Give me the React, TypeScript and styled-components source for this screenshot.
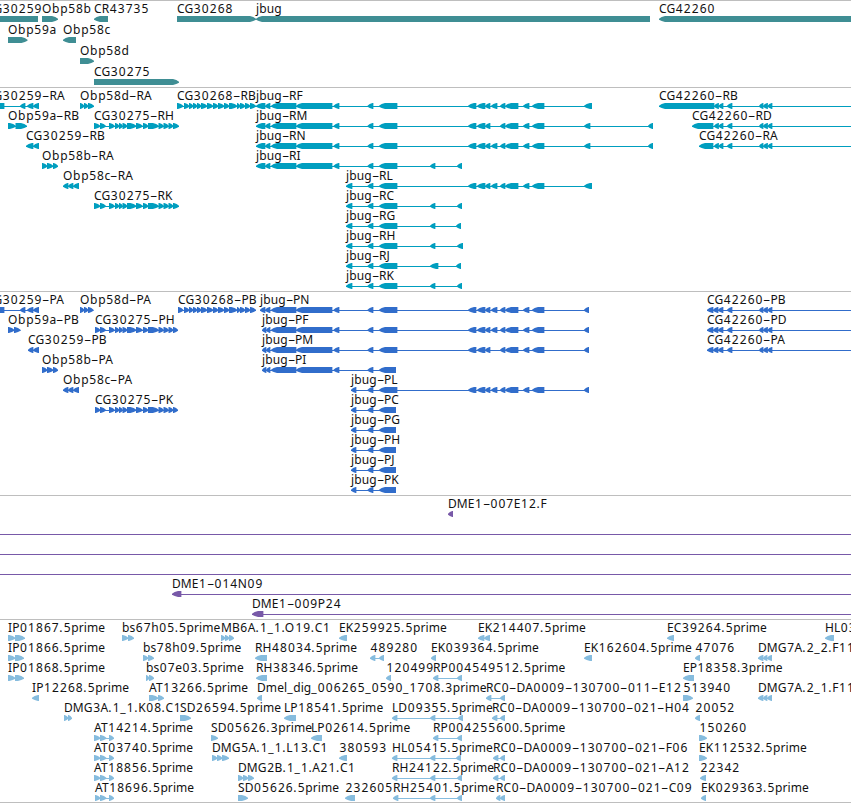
import React from 'react'
import styled, { createGlobalStyle } from 'styled-components'

type Exon = [number, number]
type Strand = '+' | '-'

interface FeatureData {
    name?: string
    strand: Strand
    exons: Exon[]
    start?: number
    end?: number
}

interface TrackData {
    id: string
    color: string
    rowHeight: number
    height: number
    rows: FeatureData[][]
}

const HEAD = 6

const fwd = (name: string, exons: Exon[], extra: Partial<FeatureData> = {}): FeatureData =>
    ({ name, strand: '+', exons, ...extra })
const rev = (name: string, exons: Exon[], extra: Partial<FeatureData> = {}): FeatureData =>
    ({ name, strand: '-', exons, ...extra })

// neighbouring exons that touch each other, given by their edges
const chain = (...edges: number[]): Exon[] =>
    edges.slice(1).map((edge, i) => [edges[i], edge] as Exon)

const cg30259: Exon[] = [[-14, 4], [20, 25], [27, 33], [33, 39]]
const cg30268: Exon[] = [[177, 183], ...chain(184, 189, 193, 197, 201), ...chain(201, 207, 213), ...chain(213, 218, 224, 229, 237, 240, 245, 250, 256)]
const cg30275: Exon[] = [...chain(94, 100, 105.5), ...chain(109, 114.5), ...chain(115, 119, 122.5, 127), ...chain(127, 136, 142.5), ...chain(143, 148, 158.5, 163.5, 168.5, 173, 179)]
const cg42260: Exon[] = [[714, 718.5], [718.5, 723], [727, 732], [759, 763], [763, 767.5], [767.5, 772]]
const cg42260p: Exon[] = [[707, 713], [713, 718], [718, 723], [727, 732], [759, 763], [763, 767.5], [767.5, 772]]

const jbugBody: Exon[] = [[271, 296], [296, 332], [333.5, 339]]
const jbugMid: Exon[] = [[367.5, 373], [379, 397]]
const jbugMidShort: Exon[] = [[367.5, 373], [379, 396]]
const jbugHead: Exon[] = [[256, 265], [265, 270], ...jbugBody, ...jbugMid]
const jbugTail: Exon[] = [[468, 476], [477, 485], [485, 490], [491, 497], [500, 505], [505, 518], [523, 529], [532, 544]]
const jbugTailM: Exon[] = jbugTail.filter(([s]) => s !== 491)

const at14214: Exon[] = [[94, 100], [100, 106], [109, 114]]

const tracks: TrackData[] = [
    {
        id: 'gene', color: '#3f8e94', rowHeight: 21, height: 87,
        rows: [
            [
                rev('CG30259', [[-14, 38]]),
                fwd('Obp58b', [[42, 58]]),
                rev('CR43735', [[94, 108]]),
                fwd('CG30268', [[177, 256]]),
                rev('jbug', [[256, 650]]),
                rev('CG42260', [[659, 860]]),
            ],
            [fwd('Obp59a', [[8, 27.5]]), rev('Obp58c', [[63, 76]])],
            [fwd('Obp58d', [[80, 94]])],
            [fwd('CG30275', [[94, 179]])],
        ],
    },
    {
        id: 'mrna', color: '#009ebf', rowHeight: 20, height: 204,
        rows: [
            [
                rev('CG30259-RA', cg30259),
                fwd('Obp58d-RA', chain(80, 84, 88, 94)),
                fwd('CG30268-RB', cg30268),
                rev('jbug-RF', [...jbugHead, ...jbugTail, [584, 592]]),
                rev('CG42260-RB', [[659, 714], ...cg42260], { end: 860 }),
            ],
            [
                fwd('Obp59a-RB', chain(8, 15.5, 27)),
                fwd('CG30275-RH', cg30275),
                rev('jbug-RM', [...jbugHead, ...jbugTailM, [584, 590], [648, 653]]),
                rev('CG42260-RD', [[692, 713], ...cg42260], { end: 860 }),
            ],
            [
                rev('CG30259-RB', chain(26, 33, 39)),
                rev('jbug-RN', [...jbugHead, ...jbugTail, [584, 590], [648, 653]]),
                rev('CG42260-RA', [[699, 713], ...cg42260], { end: 860 }),
            ],
            [
                fwd('Obp58b-RA', chain(42, 47, 53, 58)),
                rev('jbug-RI', [...jbugHead, [430, 435], [457, 462]]),
            ],
            [
                rev('Obp58c-RA', chain(63, 68, 73, 79)),
                rev('jbug-RL', [[346, 352], ...jbugMid, ...jbugTail, [584, 592]]),
            ],
            [
                fwd('CG30275-RK', cg30275),
                rev('jbug-RC', [[346, 352], ...jbugMid, [430, 435], [457, 462]]),
            ],
            [rev('jbug-RG', [[346, 352], ...jbugMid, [430, 435], [456, 461]])],
            [rev('jbug-RH', [[346, 352], ...jbugMid, [430, 435], [457, 463]])],
            [rev('jbug-RJ', [[346, 352], ...jbugMid, [430, 438], [456, 461]])],
            [rev('jbug-RK', [[346, 352], ...jbugMid, [430, 435], [457, 462]])],
        ],
    },
    {
        id: 'cds', color: '#316dcb', rowHeight: 20, height: 204,
        rows: [
            [
                rev('CG30259-PA', cg30259),
                fwd('Obp58d-PA', chain(80, 84, 88, 93.5)),
                fwd('CG30268-PB', [[178, 183], ...cg30268.slice(1)]),
                rev('jbug-PN', [[260, 265], [265, 270], ...jbugBody, ...jbugMid, ...jbugTail, [584, 589]]),
                rev('CG42260-PB', cg42260p, { end: 860 }),
            ],
            [
                fwd('Obp59a-PB', chain(8, 14, 20.5)),
                fwd('CG30275-PH', [[95, 100], ...cg30275.slice(1, -1), [173, 178]]),
                rev('jbug-PF', [[262, 266], [266, 270], ...jbugBody, ...jbugMid, ...jbugTail, [584, 589]]),
                rev('CG42260-PD', cg42260p, { end: 860 }),
            ],
            [
                rev('CG30259-PB', chain(28, 33, 39)),
                rev('jbug-PM', [[262, 266], [266, 270], ...jbugBody, ...jbugMid, ...jbugTailM, [584, 589]]),
                rev('CG42260-PA', cg42260p, { end: 860 }),
            ],
            [
                fwd('Obp58b-PA', chain(42, 47, 53, 58)),
                rev('jbug-PI', [[262, 266], [266, 270], ...jbugBody, ...jbugMidShort]),
            ],
            [
                rev('Obp58c-PA', chain(63, 68, 73, 79)),
                rev('jbug-PL', [[351, 356], ...jbugMid, ...jbugTail, [584, 589]]),
            ],
            [
                fwd('CG30275-PK', [[95, 100], ...cg30275.slice(1, -1), [173, 178]]),
                rev('jbug-PC', [[351, 356], ...jbugMidShort]),
            ],
            [rev('jbug-PG', [[351, 356], ...jbugMidShort])],
            [rev('jbug-PH', [[351, 356], ...jbugMidShort])],
            [rev('jbug-PJ', [[351, 356], ...jbugMidShort])],
            [rev('jbug-PK', [[351, 356], ...jbugMidShort])],
        ],
    },
    {
        id: 'bac', color: '#7859a8', rowHeight: 20, height: 124,
        rows: [
            [rev('DME1-007E12.F', [[448, 453]])],
            [{ strand: '-', exons: [], start: 0, end: 860 }],
            [{ strand: '-', exons: [], start: 0, end: 860 }],
            [{ strand: '-', exons: [], start: 0, end: 860 }],
            [rev('DME1-014N09', [[172, 181]], { end: 860 })],
            [rev('DME1-009P24', [[252, 263]], { end: 860 })],
        ],
    },
    {
        id: 'est', color: '#86bcde', rowHeight: 20, height: 183,
        rows: [
            [
                fwd('IP01867.5prime', chain(8, 15, 25)),
                fwd('bs67h05.5prime', chain(122, 128, 134)),
                fwd('MB6A.1_1.O19.C1', chain(221, 225, 229, 234)),
                rev('EK259925.5prime', [[339, 347]]),
                rev('EK214407.5prime', chain(478, 484, 490)),
                rev('EC39264.5prime', [[667, 674]]),
                rev('HL03', [[825, 834]]),
            ],
            [
                fwd('IP01866.5prime', chain(8, 15, 24)),
                fwd('bs78h09.5prime', chain(143, 148, 154)),
                rev('RH48034.5prime', [[255, 267]]),
                rev('489280', [[370, 375], [379, 384]]),
                rev('EK039364.5prime', [[431, 436]]),
                rev('EK162604.5prime', [[584, 592]]),
                rev('47076', [[695, 700]]),
                rev('DMG7A.2_2.F11', chain(758, 763, 767, 772)),
            ],
            [
                fwd('IP01868.5prime', chain(8, 15, 24)),
                fwd('bs07e03.5prime', chain(146, 149, 154)),
                rev('RH38346.5prime', [[256, 267]]),
                rev('120499', [[386, 391]]),
                rev('RP004549512.5prime', [[433, 438], [457, 462]]),
                rev('EP18358.3prime', [[683, 694]]),
            ],
            [
                rev('IP12268.5prime', [[32, 39]]),
                fwd('AT13266.5prime', chain(149, 158, 164)),
                rev('Dmel_dig_006265_0590_1708.3prime', [[257, 262]]),
                rev('RC0-DA0009-130700-011-E12', [[486, 491], [500, 505]]),
                fwd('513940', [[683, 693]]),
                rev('DMG7A.2_1.F11', chain(758, 763, 767, 772)),
            ],
            [
                fwd('DMG3A.1_1.K08.C1', chain(64, 68, 72)),
                fwd('SD26594.5prime', [[180, 191]]),
                rev('LP18541.5prime', [[284, 296]]),
                rev('LD09355.5prime', [[392, 397], [430, 435], [458, 463]]),
                rev('RC0-DA0009-130700-021-H04', [[492, 497], [500, 505]]),
                rev('20052', [[695, 700]]),
            ],
            [
                fwd('AT14214.5prime', at14214),
                fwd('SD05626.3prime', [[211, 218]]),
                rev('LP02614.5prime', [[311, 322]]),
                rev('RP004255600.5prime', [[433, 438], [457, 462]]),
                fwd('150260', [[699, 707]]),
            ],
            [
                fwd('AT03740.5prime', at14214),
                fwd('DMG5A.1_1.L13.C1', chain(212, 217, 222, 229)),
                rev('380593', [[339, 347]]),
                rev('HL05415.5prime', [[392, 397], [430, 435], [456, 461]]),
                rev('RC0-DA0009-130700-021-F06', [[493, 498], [500, 505]]),
                fwd('EK112532.5prime', [[699, 707]]),
            ],
            [
                fwd('AT18856.5prime', at14214),
                fwd('DMG2B.1_1.A21.C1', chain(238, 243, 248, 254)),
                rev('RH24122.5prime', [[392, 397], [430, 435], [457, 462]]),
                rev('RC0-DA0009-130700-021-A12', [[493, 498], [500, 505]]),
                rev('22342', [[700, 706]]),
            ],
            [
                fwd('AT18696.5prime', [[95, 100], [100, 106], [109, 114]]),
                fwd('SD05626.5prime', [[238, 248]]),
                rev('232605', [[345, 355]]),
                rev('RH25401.5prime', [[393, 398], [430, 435], [457, 462]]),
                rev('RC0-DA0009-130700-021-C09', chain(496, 500, 505)),
                rev('EK029363.5prime', [[701, 706]]),
            ],
        ],
    },
]

// a box with a blunt arrow head; short exons are all head
const exonPoints = ([s, e]: Exon, strand: Strand, width: number, origin: number) => {
    const a = s - origin
    const b = Math.min(e - origin + 0.4, width)
    const head = Math.min(HEAD, (b - a) * 0.85)
    const mid = head * 0.45
    return strand === '+'
        ? `${a},0 ${b - head},0 ${b - mid},1 ${b},2.8 ${b},3.8 ${b - mid},5 ${b - head},6 ${a},6`
        : `${b},0 ${a + head},0 ${a + mid},1 ${a},2.8 ${a},3.8 ${a + mid},5 ${a + head},6 ${b},6`
}

const Name = ({ text }: { text: string }) => (
    <Label>
        {text.split(/(\d+|-|[._]|Ob)/).map((part, i) => {
            if (part === '-') return <Dash key={i}>-</Dash>
            if (/^\d/.test(part)) return <Digits key={i}>{part}</Digits>
            if (/^[._O]/.test(part)) return <Wide key={i}>{part}</Wide>
            return part
        })}
    </Label>
)

const Feature = ({ data, color }: { data: FeatureData, color: string }) => {
    const { name, strand, exons } = data
    const start = data.start ?? exons[0][0]
    const end = data.end ?? exons[exons.length - 1][1]
    const width = end - start

    return (
        <FeatureBox style={{ left: start }}>
            <Name text={name ?? ''} />
            <Glyph width={width} height={6} fill={color}>
                {(exons.length !== 1 || data.end) && <rect y={3} width={width} height={1} />}
                {exons.map((exon, i) => (
                    <polygon key={i} points={exonPoints(exon, strand, width, start)} />
                ))}
            </Glyph>
        </FeatureBox>
    )
}

const App = () => {
    return (
        <Browser>
            <GlobalStyle />
            {tracks.map(track => (
                <Track key={track.id} height={track.height}>
                    {track.rows.map((row, i) => (
                        <Row key={i} height={track.rowHeight}>
                            {row.map((feature, j) => (
                                <Feature key={j} data={feature} color={track.color} />
                            ))}
                        </Row>
                    ))}
                </Track>
            ))}
            <Track height={1} />
        </Browser>
    )
}

export default App

const GlobalStyle = createGlobalStyle`
    body {
        margin: 0;
        background: #fff;
    }
`

const Browser = styled.main`
    display: flex;
    flex-direction: column;
    width: 851px;
    height: 803px;
    overflow: hidden;
    background: #fff;
    color: #111;
    font-family: 'Noto Sans', 'DejaVu Sans', sans-serif;
    font-size: 12px;
`

const Track = styled.section<{ height: number }>`
    box-sizing: border-box;
    flex: none;
    height: ${props => props.height}px;
    border-top: 1px solid #bebebe;
`

const Row = styled.div<{ height: number }>`
    position: relative;
    height: ${props => props.height}px;
`

/* features sit at their own position along the sequence */
const FeatureBox = styled.div`
    position: absolute;
    top: 0;
    display: flex;
    flex-direction: column;
`

const Label = styled.span`
    height: 15px;
    line-height: 15px;
    letter-spacing: 0.08px;
    white-space: nowrap;
`

const Digits = styled.span`
    margin-left: 0.5px;
    margin-right: -0.5px;
    letter-spacing: 1.1px;
`

const Wide = styled.span`
    letter-spacing: 0.7px;
`

const Dash = styled.span`
    display: inline-block;
    width: 7.4px;
    text-align: center;
    transform: scaleX(1.9);
`

const Glyph = styled.svg`
    display: block;
    flex: none;
`
